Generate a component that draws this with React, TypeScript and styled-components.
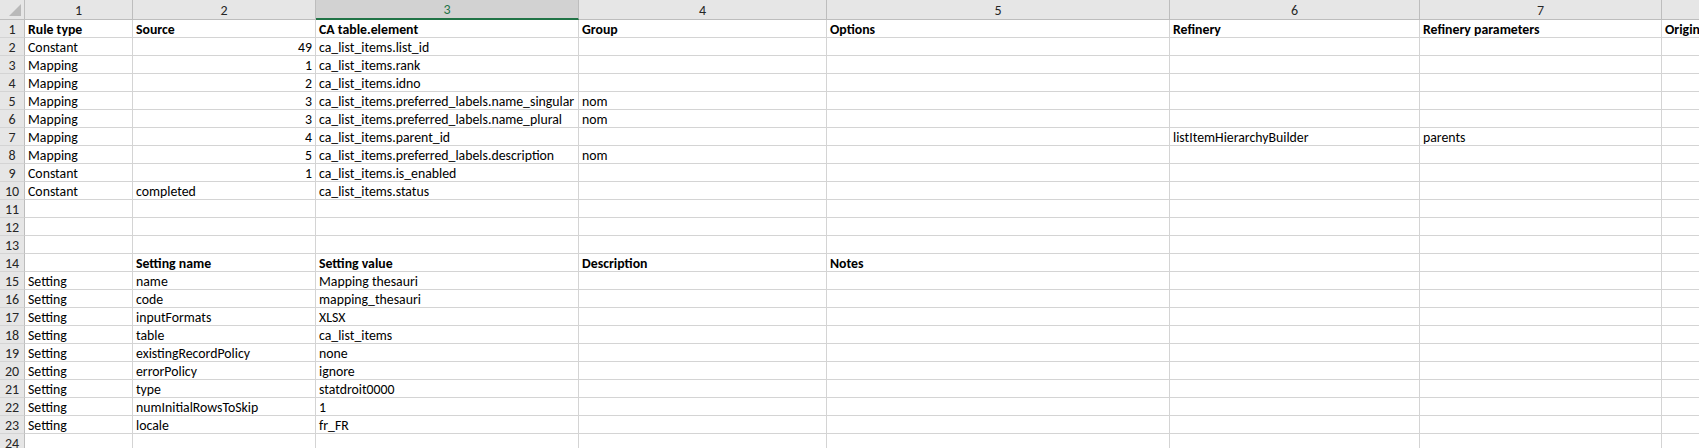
import styled, { createGlobalStyle } from 'styled-components';

const GlobalStyle = createGlobalStyle`
  html, body {
    margin: 0;
    padding: 0;
    background: #ffffff;
    overflow: hidden;
  }
  * { box-sizing: border-box; }
`;

const COLS = [108, 183, 263, 248, 343, 250, 242, 120];

const Sheet = styled.div`
  display: grid;
  grid-template-columns: 25px ${COLS.map((w) => `${w}px`).join(' ')};
  grid-auto-rows: 18px;
  grid-template-rows: 20px;
  width: 1699px;
  height: 448px;
  overflow: hidden;
  font-family: Calibri, Carlito, 'Liberation Sans', Arial, sans-serif;
  font-size: 13.8px;
  color: #000;
`;

const Corner = styled.div`
  position: relative;
  background: #e6e6e6;
  border-right: 1px solid #bdbdbd;
  border-bottom: 1px solid #bdbdbd;

  &::after {
    content: '';
    position: absolute;
    right: 3px;
    bottom: 3px;
    width: 0;
    height: 0;
    border-left: 12px solid transparent;
    border-bottom: 12px solid #b9b9b9;
  }
`;

const ColHead = styled.div<{ $selected?: boolean }>`
  display: flex;
  align-items: center;
  justify-content: center;
  padding-top: 1px;
  background: ${({ $selected }) => ($selected ? '#d2d2d2' : '#e6e6e6')};
  color: ${({ $selected }) => ($selected ? '#217346' : '#262626')};
  border-right: 1px solid #bdbdbd;
  border-bottom: ${({ $selected }) => ($selected ? '2px solid #217346' : '1px solid #bdbdbd')};
  font-size: 14px;
`;

const RowHead = styled.div`
  padding-top: 1px;
  text-align: center;
  background: #e6e6e6;
  color: #262626;
  border-right: 1px solid #bdbdbd;
  border-bottom: 1px solid #d4d4d4;
  line-height: 17px;
  font-size: 14px;
`;

const Cell = styled.div<{ $bold?: boolean; $num?: boolean }>`
  padding: 1px 3px 0;
  border-right: 1px solid #d4d4d4;
  border-bottom: 1px solid #d4d4d4;
  line-height: 17px;
  white-space: nowrap;
  text-align: ${({ $num }) => ($num ? 'right' : 'left')};
  font-weight: ${({ $bold }) => ($bold ? 700 : 400)};
`;

const isNum = (v: string) => /^\d+$/.test(v);

const rows: string[][] = [
  ['Rule type', 'Source', 'CA table.element', 'Group', 'Options', 'Refinery', 'Refinery parameters', 'Origin'],
  ['Constant', '49', 'ca_list_items.list_id'],
  ['Mapping', '1', 'ca_list_items.rank'],
  ['Mapping', '2', 'ca_list_items.idno'],
  ['Mapping', '3', 'ca_list_items.preferred_labels.name_singular', 'nom'],
  ['Mapping', '3', 'ca_list_items.preferred_labels.name_plural', 'nom'],
  ['Mapping', '4', 'ca_list_items.parent_id', '', '', 'listItemHierarchyBuilder', 'parents'],
  ['Mapping', '5', 'ca_list_items.preferred_labels.description', 'nom'],
  ['Constant', '1', 'ca_list_items.is_enabled'],
  ['Constant', 'completed', 'ca_list_items.status'],
  [],
  [],
  [],
  ['', 'Setting name', 'Setting value', 'Description', 'Notes'],
  ['Setting', 'name', 'Mapping thesauri'],
  ['Setting', 'code', 'mapping_thesauri'],
  ['Setting', 'inputFormats', 'XLSX'],
  ['Setting', 'table', 'ca_list_items'],
  ['Setting', 'existingRecordPolicy', 'none'],
  ['Setting', 'errorPolicy', 'ignore'],
  ['Setting', 'type', 'statdroit0000'],
  ['Setting', 'numInitialRowsToSkip', '1'],
  ['Setting', 'locale', 'fr_FR'],
  [],
];

const boldRows = new Set([0, 13]);

function SheetRow({ index, row, bold }: { index: number; row: string[]; bold: boolean }) {
  return (
    <>
      <RowHead>{index + 1}</RowHead>
      {COLS.map((_, c) => {
        const v = row[c] ?? '';
        // only the source column of the mapping block holds real numbers
        const num = !bold && c === 1 && index < 13 && isNum(v);
        return (
          <Cell key={c} $bold={bold} $num={num}>
            {v}
          </Cell>
        );
      })}
    </>
  );
}

export default function App() {
  return (
    <>
      <GlobalStyle />
      <Sheet>
        <Corner />
        {COLS.map((_, i) => (
          <ColHead key={i} $selected={i === 2}>{i + 1}</ColHead>
        ))}
        {rows.map((row, r) => (
          <SheetRow key={r} index={r} row={row} bold={boldRows.has(r)} />
        ))}
      </Sheet>
    </>
  );
}
